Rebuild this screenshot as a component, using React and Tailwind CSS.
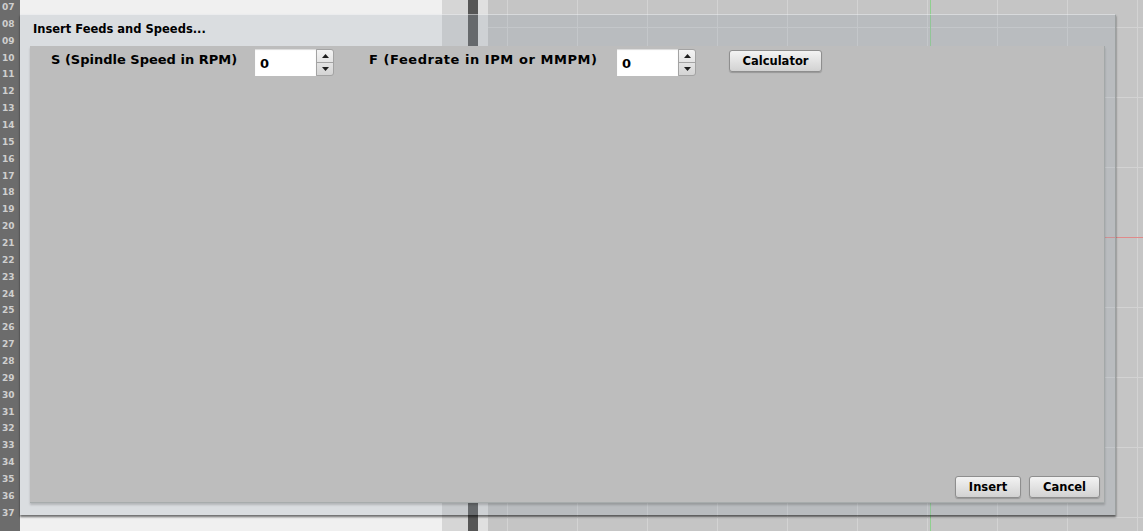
import React from "react";

const lineNumbers = Array.from({ length: 31 }, (_, i) => String(i + 7).padStart(2, "0"));

const font = { fontFamily: '"DejaVu Sans", Verdana, sans-serif' };

function Spinner() {
  return (
    <div className="flex flex-col w-[18px] h-[27px] border border-[#a3a3a3] rounded-r-[3px] bg-gradient-to-b from-[#f4f4f4] to-[#d4d4d4]">
      <div className="flex-1 flex items-center justify-center border-b border-[#a3a3a3]">
        <svg width="7" height="4" viewBox="0 0 7 4">
          <path d="M0 4 L3.5 0 L7 4Z" fill="#1e1e1e" />
        </svg>
      </div>
      <div className="flex-1 flex items-center justify-center">
        <svg width="7" height="4" viewBox="0 0 7 4">
          <path d="M0 0 L3.5 4 L7 0Z" fill="#1e1e1e" />
        </svg>
      </div>
    </div>
  );
}

function NumberField() {
  return (
    <div className="flex">
      <input
        readOnly
        value="0"
        className="w-[61px] h-[27px] bg-white pl-[5px] pt-[2px] text-[13px] font-bold text-black outline-none shadow-[inset_0_1px_1px_rgba(0,0,0,0.15)]"
        style={font}
      />
      <Spinner />
    </div>
  );
}

function GrayButton({ children, className = "" }) {
  return (
    <button
      className={`h-[22px] pt-[1px] rounded-[3px] border border-[#8e8e8e] bg-gradient-to-b from-[#f3f3f3] to-[#d2d2d2] text-[11.5px] font-bold text-black shadow-[0_1px_1px_rgba(0,0,0,0.2)] ${className}`}
      style={font}
    >
      {children}
    </button>
  );
}

export default function App() {
  return (
    <div className="relative w-[1143px] h-[531px] overflow-hidden bg-[#f0f0f0]">
      {/* background: editor + splitter + canvas */}
      <div className="flex h-full">
        <div className="w-[20px] h-full bg-[#6c6c6c] overflow-hidden">
          <div className="mt-[-1px] pl-[2px]">
            {lineNumbers.map((n) => (
              <div
                key={n}
                className="h-[16.87px] leading-[16.87px] text-[9px] font-bold text-[#cfcfcf]"
                style={font}
              >
                {n}
              </div>
            ))}
          </div>
        </div>
        <div className="w-[422px] h-full bg-[#f0f0f0]" />
        <div className="w-[26px] h-full bg-[#d6d6d6]" />
        <div className="w-[10px] h-full bg-[#565656]" />
        <div className="w-[10px] h-full bg-[#e0e0e0]" />
        <div className="flex-1 h-full bg-[#c5c5c5]">
          <svg width="655" height="531" className="block">
            <defs>
              <pattern id="grid" x="19" y="27" width="70" height="70" patternUnits="userSpaceOnUse">
                <path d="M0.5 0 V70 M0 0.5 H70" stroke="#d3d3d3" strokeWidth="1" fill="none" />
              </pattern>
            </defs>
            <rect width="655" height="531" fill="url(#grid)" />
            <line x1="442.5" y1="0" x2="442.5" y2="531" stroke="#8fd08f" strokeWidth="1" />
            <line x1="0" y1="237.5" x2="655" y2="237.5" stroke="#e08a8a" strokeWidth="1" />
          </svg>
        </div>
      </div>

      {/* dialog */}
      <div
        className="absolute left-[20px] top-[14px] w-[1096px] h-[501px] flex flex-col bg-[rgba(150,165,175,0.25)] border-t border-[rgba(255,255,255,0.45)] border-r border-r-[#9ca1a1] shadow-[0_2px_2px_rgba(0,0,0,0.55)]"
        style={font}
      >
        <div className="h-[31px] flex items-center pl-[13px] pb-[2px] text-[11.5px] font-bold text-black">
          Insert Feeds and Speeds...
        </div>
        <div className="ml-[10px] mr-[10px] h-[457px] flex flex-col justify-between bg-[#bdbdbd] border-r border-[#a3a8a8] border-b border-b-[#a7acac] shadow-[0_2px_2px_rgba(0,0,0,0.18)]">
          <div className="flex items-start pl-[21px] pt-[3px]">
            <div className="w-[204px] leading-[22px] text-[13px] font-bold text-black">
              S (Spindle Speed in RPM)
            </div>
            <NumberField />
            <div className="w-[35px]" />
            <div className="w-[248px] leading-[22px] text-[13px] tracking-[0.55px] font-bold text-black">
              F (Feedrate in IPM or MMPM)
            </div>
            <NumberField />
            <GrayButton className="ml-[33px] mt-[1px] w-[93px]">Calculator</GrayButton>
          </div>
          <div className="flex justify-end gap-[8px] pr-[4px] pb-[4px]">
            <GrayButton className="w-[66px]">Insert</GrayButton>
            <GrayButton className="w-[71px]">Cancel</GrayButton>
          </div>
        </div>
      </div>
    </div>
  );
}
